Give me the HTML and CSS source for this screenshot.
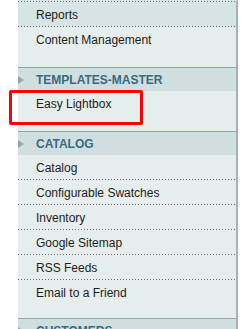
FILE: index.html
```html
<!DOCTYPE html>
<html lang="en">
<head>
    <meta charset="UTF-8">
    <title>Admin Menu</title>
    <link rel="stylesheet" href="styles.css">
</head>
<body>
    <div class="sidebar">
        <div class="section">
            <ul class="nav-list">
                <li class="nav-item first active"><a href="#">Reports</a></li>
                <li class="nav-item"><a href="#">Content Management</a></li>
            </ul>
        </div>

        <div class="section">
            <h3 class="section-title"><span class="arrow"></span>TEMPLATES-MASTER</h3>
            <ul class="nav-list">
                <li class="nav-item marked"><a href="#">Easy Lightbox</a></li>
            </ul>
        </div>

        <div class="section">
            <h3 class="section-title"><span class="arrow"></span>CATALOG</h3>
            <ul class="nav-list short">
                <li class="nav-item"><a href="#">Catalog</a></li>
                <li class="nav-item"><a href="#">Configurable Swatches</a></li>
                <li class="nav-item"><a href="#">Inventory</a></li>
                <li class="nav-item"><a href="#">Google Sitemap</a></li>
                <li class="nav-item"><a href="#">RSS Feeds</a></li>
                <li class="nav-item"><a href="#">Email to a Friend</a></li>
            </ul>
        </div>

        <div class="section">
            <h3 class="section-title"><span class="arrow"></span>CUSTOMERS</h3>
        </div>
    </div>
</body>
</html>
```

FILE: styles.css
```css
:root {
    --panel: #e6eeed;
    --panel-active: #d6e4e3;
    --header: #cfdedf;
    --header-line: #8fa8ad;
    --header-text: #3a6a7f;
    --text: #1c1c1c;
    --dots: #6a6f70;
    --edge: #a3b3b3;
    --mark: #ff0000;
}

* {
    margin: 0;
    padding: 0;
    box-sizing: border-box;
}

body {
    background: #ffffff;
    font-family: "Liberation Sans", Arial, sans-serif;
    font-size: 12px;
    overflow: hidden;
}

.sidebar {
    margin-left: 18px;
    width: 220px;
    background: var(--panel);
    border-top: 1px solid var(--panel-active);
    border-right: 2px solid var(--edge);
}

.nav-list {
    list-style: none;
    padding-bottom: 16px;
}

.nav-list.short {
    padding-bottom: 14px;
}

.nav-item {
    position: relative;
    height: 25px;
    background-image: linear-gradient(to right, var(--dots) 1px, transparent 1px);
    background-size: 3px 1px;
    background-repeat: repeat-x;
    background-position: left bottom;
}

.nav-item:last-child {
    height: 24px;
    background-image: none;
}

.nav-item.first::before {
    content: "";
    display: block;
    height: 1px;
    background-image: linear-gradient(to right, var(--dots) 1px, transparent 1px);
    background-size: 3px 1px;
}

.nav-item.first {
    height: 26px;
}

.nav-item.active {
    background-color: var(--panel-active);
}

.nav-item a {
    display: block;
    padding-left: 18px;
    padding-top: 1px;
    line-height: 24px;
    color: var(--text);
    text-decoration: none;
}

.nav-item.marked::after {
    content: "";
    position: absolute;
    left: -9px;
    top: -1px;
    width: 128px;
    height: 29px;
    border: 3px solid var(--mark);
    border-radius: 2px;
}

.section-title {
    display: flex;
    align-items: center;
    gap: 12px;
    height: 24px;
    background: var(--header);
    border-top: 1px solid var(--header-line);
    color: var(--header-text);
    font-size: 12px;
    font-weight: bold;
}

.arrow {
    width: 0;
    height: 0;
    border-top: 4px solid transparent;
    border-bottom: 4px solid transparent;
    border-left: 6px solid #8fa9b1;
}
```
